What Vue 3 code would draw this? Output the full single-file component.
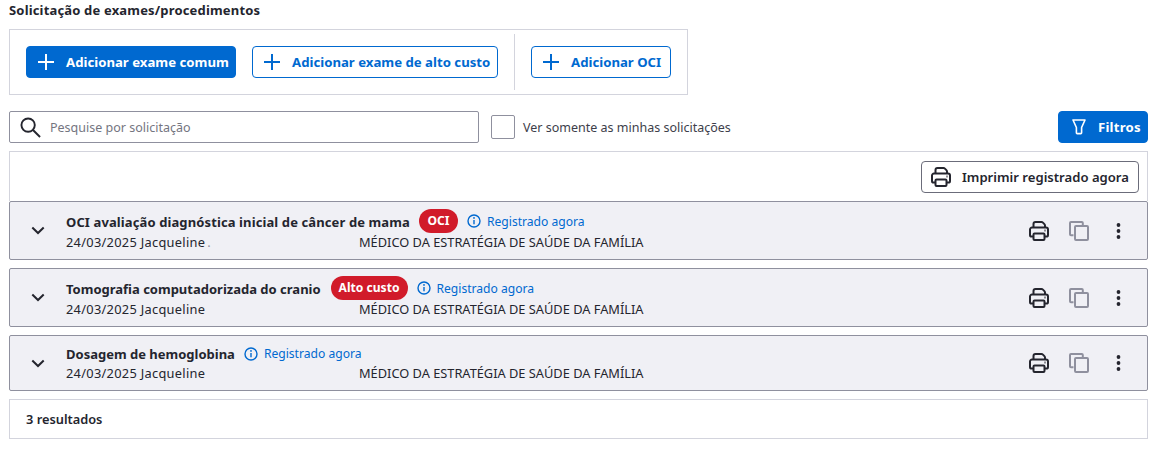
<template>
  <main class="page">
    <h1 class="page-title">Solicitação de exames/procedimentos</h1>

    <section class="add-box">
      <button class="btn btn-primary">
        <svg class="icon-plus" viewBox="0 0 16 16"><path d="M8 0v16M0 8h16" /></svg>
        Adicionar exame comum
      </button>
      <button class="btn btn-outline">
        <svg class="icon-plus" viewBox="0 0 16 16"><path d="M8 0v16M0 8h16" /></svg>
        Adicionar exame de alto custo
      </button>
      <span class="divider"></span>
      <button class="btn btn-outline">
        <svg class="icon-plus" viewBox="0 0 16 16"><path d="M8 0v16M0 8h16" /></svg>
        Adicionar OCI
      </button>
    </section>

    <section class="filter-row">
      <label class="search">
        <svg class="icon-search" viewBox="0 0 22 22">
          <circle cx="8.5" cy="8.5" r="7" />
          <path d="M13.6 13.6l7.4 7.400" />
        </svg>
        <input type="text" placeholder="Pesquise por solicitação" />
      </label>
      <span class="checkbox"></span>
      <span class="checkbox-label">Ver somente as minhas solicitações</span>
      <button class="btn btn-primary btn-filter">
        <svg class="icon-filter" viewBox="0 0 14 16">
          <path d="M1 1h12L9.600 8.500v5.300a.8.8 0 0 1-.8.8H5.200a.8.8 0 0 1-.8-.8V8.500z" />
        </svg>
        Filtros
      </button>
    </section>

    <section class="print-bar">
      <button class="btn btn-print">
        <svg class="icon-print" viewBox="0 0 20 20"><use href="#printer" /></svg>
        Imprimir registrado agora
      </button>
    </section>

    <section class="list">
      <article v-for="item in items" :key="item.title" class="row" :class="{ compact: !item.badge }">
        <svg class="icon-chevron" viewBox="0 0 14 9"><path d="M1.300 1.500L7 7l5.700-5.500" /></svg>
        <div class="row-body">
          <div class="row-title">
            <strong>{{ item.title }}</strong>
            <span v-if="item.badge" class="badge">{{ item.badge }}</span>
            <span class="status">
              <svg class="icon-info" viewBox="0 0 14 14">
                <circle cx="7" cy="7" r="6" />
                <path d="M7 6v4.200" />
                <circle class="dot" cx="7" cy="3.900" r="0.9" />
              </svg>
              Registrado agora
            </span>
          </div>
          <div class="row-meta">
            <span class="meta-who"><span class="who-text">24/03/2025 Jacqueline</span><i v-if="item.dot" class="trail">.</i></span>
            <span>MÉDICO DA ESTRATÉGIA DE SAÚDE DA FAMÍLIA</span>
          </div>
        </div>
        <div class="row-actions">
          <svg class="icon-print" viewBox="0 0 20 20"><use href="#printer" /></svg>
          <svg class="icon-copy" viewBox="0 0 20 20">
            <path d="M4.500 14.200H2a1 1 0 0 1-1-1V2a1 1 0 0 1 1-1h10.800a1 1 0 0 1 1 1v3" />
            <rect x="6" y="5" width="13" height="14" rx="1" />
          </svg>
          <svg class="icon-more" viewBox="0 0 4 16">
            <circle cx="2" cy="2" r="1.900" />
            <circle cx="2" cy="8" r="1.900" />
            <circle cx="2" cy="14" r="1.900" />
          </svg>
        </div>
      </article>
    </section>

    <footer class="results">3 resultados</footer>

    <svg class="sprite" aria-hidden="true">
      <symbol id="printer" viewBox="0 0 20 20">
        <path d="M4.500 6.500V3a2 2 0 0 1 2-2h6a2 2 0 0 1 1.400.6l1.500 1.500a2 2 0 0 1 .6 1.400v2" />
        <path d="M4.500 15.500H2.600a1.600 1.600 0 0 1-1.600-1.600V8.500a2 2 0 0 1 2-2h14a2 2 0 0 1 2 2v5.400a1.600 1.600 0 0 1-1.600 1.600h-1.900" />
        <rect x="4.500" y="12.500" width="11" height="6.500" rx="1" />
        <path d="M15.500 9.500h1" />
      </symbol>
    </svg>
  </main>
</template>

<script setup>
const items = [
  { title: 'OCI avaliação diagnóstica inicial de câncer de mama', badge: 'OCI', dot: true },
  { title: 'Tomografia computadorizada do cranio', badge: 'Alto custo' },
  { title: 'Dosagem de hemoglobina' }
]
</script>

<style>
body {
  margin: 0;
  background: #fff;
}
</style>

<style scoped>
.page {
  box-sizing: border-box;
  width: 1157px;
  height: 449px;
  padding: 0 9px;
  overflow: hidden;
  font-family: "Noto Sans", "Open Sans", sans-serif;
  font-size: 12.5px;
  color: #24252e;
}

.page-title {
  margin: 0;
  height: 29px;
  line-height: 20px;
  font-size: 13px;
  font-weight: 700;
  letter-spacing: 0.17px;
}

.add-box {
  box-sizing: border-box;
  display: flex;
  align-items: center;
  width: 679px;
  height: 66px;
  padding: 0 16px;
  border: 1px solid #d3d4dd;
}

.btn {
  box-sizing: border-box;
  display: inline-flex;
  align-items: center;
  height: 32px;
  padding: 0;
  border: 1px solid #0069d0;
  border-radius: 4px;
  font-family: inherit;
  font-size: 13.2px;
  font-weight: 700;
  white-space: nowrap;
}

.btn-primary {
  background: #0069d0;
  color: #fff;
}

.btn-outline {
  background: #fff;
  color: #0069d0;
}

.add-box .btn {
  padding-left: 11px;
  gap: 12px;
}

.add-box .btn:nth-child(1) {
  width: 210px;
}

.add-box .btn:nth-child(2) {
  width: 246px;
  margin-left: 16px;
}

.add-box .btn:nth-child(4) {
  width: 140px;
}

.divider {
  width: 1px;
  height: 56px;
  margin: 0 16px;
  background: #d3d4dd;
}

.icon-plus {
  width: 16px;
  height: 16px;
  fill: none;
  stroke: currentColor;
  stroke-width: 2;
  flex-shrink: 0;
}

.filter-row {
  display: flex;
  align-items: center;
  margin-top: 16px;
  height: 32px;
}

.search {
  box-sizing: border-box;
  display: flex;
  align-items: center;
  gap: 9px;
  width: 470px;
  height: 32px;
  padding-left: 10px;
  border: 1px solid #8f909e;
  border-radius: 2px;
}

.search input {
  flex: 1;
  border: 0;
  outline: 0;
  padding: 0;
  background: none;
  font-family: inherit;
  font-size: 12.5px;
  color: #24252e;
}

.search input::placeholder {
  color: #74757f;
  opacity: 1;
}

.icon-search {
  width: 21px;
  height: 21px;
  fill: none;
  stroke: #24252e;
  stroke-width: 2;
}

.checkbox {
  box-sizing: border-box;
  width: 24px;
  height: 24px;
  margin-left: 12px;
  border: 1px solid #8f909e;
  border-radius: 2px;
}

.checkbox-label {
  margin-left: 8px;
  color: #3d3e4a;
}

.btn-filter {
  width: 90px;
  margin-left: auto;
  padding-left: 13px;
  gap: 12px;
  letter-spacing: 0.2px;
}

.icon-filter {
  width: 14px;
  height: 16px;
  fill: none;
  stroke: #fff;
  stroke-width: 1.6;
  stroke-linejoin: round;
  flex-shrink: 0;
}

.print-bar {
  box-sizing: border-box;
  display: flex;
  justify-content: flex-end;
  align-items: center;
  height: 50px;
  margin-top: 8px;
  padding-right: 8px;
  border: 1px solid #d3d4dd;
  border-bottom: 0;
}

.btn-print {
  width: 218px;
  padding-left: 9px;
  gap: 11px;
  border-color: #6b6c7a;
  background: #fff;
  color: #24252e;
  font-size: 13.1px;
  font-weight: 600;
}

.icon-print {
  width: 20px;
  height: 20px;
  fill: none;
  stroke: #24252e;
  stroke-width: 2;
  flex-shrink: 0;
}

.list {
  display: flex;
  flex-direction: column;
  gap: 8px;
}

.row {
  box-sizing: border-box;
  display: flex;
  align-items: center;
  height: 59px;
  padding: 0 26px 0 21px;
  border: 1px solid #8f909e;
  border-radius: 2px;
  background: #f0f0f5;
}

.row.compact {
  height: 56px;
}

.icon-chevron {
  width: 14px;
  height: 9px;
  fill: none;
  stroke: #24252e;
  stroke-width: 2;
  flex-shrink: 0;
}

.row-body {
  flex: 1;
  margin-left: 21px;
  padding-bottom: 1px;
}

.row-title {
  display: flex;
  align-items: center;
  height: 24px;
  font-size: 13px;
}

.row-title strong {
  padding-top: 2px;
  font-weight: 700;
}

.row:nth-child(1) strong {
  letter-spacing: 0.11px;
}

.row:nth-child(2) .badge {
  margin-left: 10px;
  padding: 0 8px;
}

.badge {
  margin-left: 9px;
  padding: 0 8.5px;
  height: 24px;
  line-height: 24px;
  border-radius: 12px;
  background: #d11b2a;
  color: #fff;
  font-size: 12.1px;
  font-weight: 700;
}

.status {
  display: inline-flex;
  align-items: center;
  gap: 6px;
  margin-left: 9px;
  color: #0069d0;
  font-size: 12.1px;
}

.icon-info {
  width: 14px;
  height: 14px;
  fill: none;
  stroke: currentColor;
  stroke-width: 1.4;
}

.icon-info .dot {
  fill: currentColor;
  stroke: none;
}

.row-meta {
  display: flex;
  line-height: 18px;
  font-size: 12.8px;
}

.row.compact .row-body {
  padding-bottom: 2px;
}

.row.compact .row-title {
  height: 22px;
}

.row.compact strong {
  padding-top: 0;
}

.row.compact .row-meta {
  margin-top: -1px;
}

.meta-who {
  width: 293px;
}

.who-text {
  letter-spacing: 0.3px;
}

.trail {
  font-style: normal;
  color: #8f909e;
  margin-left: 2px;
}

.row-actions {
  display: flex;
  align-items: center;
}

.icon-copy {
  width: 20px;
  height: 20px;
  margin-left: 20px;
  fill: none;
  stroke: #8f909e;
  stroke-width: 2;
}

.icon-more {
  width: 5px;
  height: 16px;
  margin-left: 27px;
  fill: #24252e;
}

.results {
  box-sizing: border-box;
  display: flex;
  align-items: center;
  height: 40px;
  margin-top: 8px;
  padding-left: 16px;
  border: 1px solid #d3d4dd;
  font-size: 12.8px;
  font-weight: 600;
}

.sprite {
  position: absolute;
  width: 0;
  height: 0;
}
</style>
